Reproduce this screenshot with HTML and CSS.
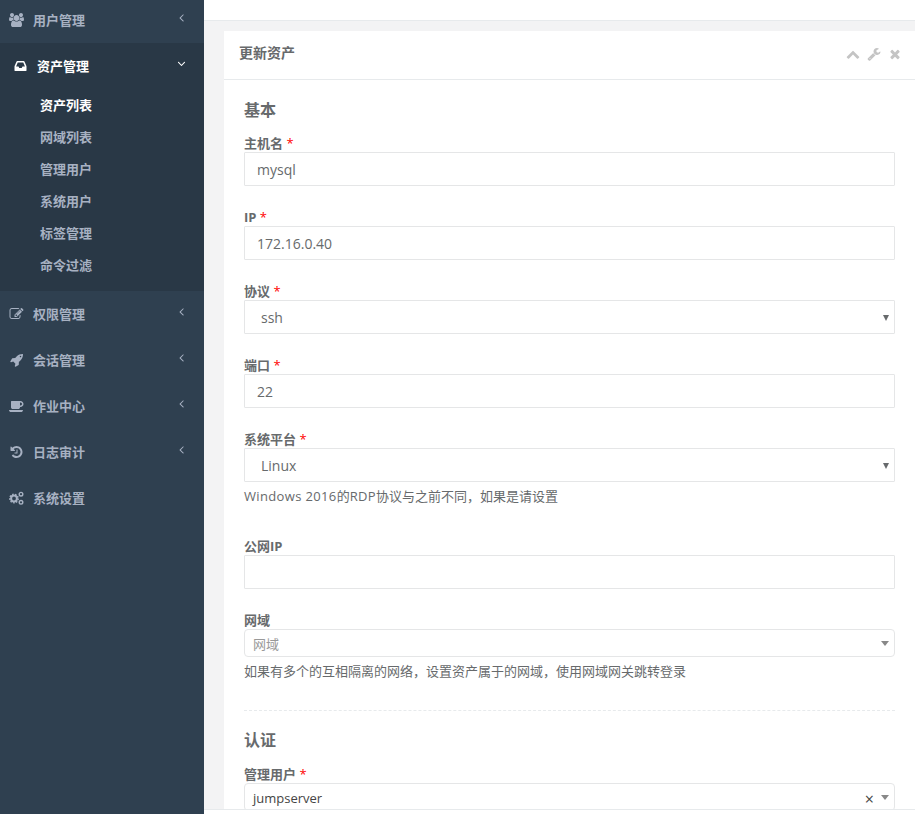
FILE: index.html
```html
<!DOCTYPE html>
<html lang="zh-CN">
<head>
<meta charset="utf-8">
<title>更新资产</title>
<link rel="stylesheet" href="styles.css">
</head>
<body>
<aside class="sidebar">
  <nav class="nav">
    <a class="nav-item">
      <svg class="ico" viewBox="0 0 1920 1792"><path d="M593 896q-162 5-265 128h-134q-82 0-138-40.500t-56-118.500q0-353 124-353 6 0 43.500 21t97.500 42.500 119 21.500q67 0 133-23-5 37-5 66 0 139 81 256zm1071 637q0 120-73 189.500t-194 69.500h-874q-121 0-194-69.500t-73-189.500q0-53 3.500-103.500t14-109 26.500-108.500 43-97.500 62-81 85.500-53.500 111.500-20q10 0 43 21.500t73 48 107 48 135 21.500 135-21.500 107-48 73-48 43-21.500q61 0 111.500 20t85.500 53.500 62 81 43 97.500 26.500 108.500 14 109 3.500 103.500zm-1024-1277q0 106-75 181t-181 75-181-75-75-181 75-181 181-75 181 75 75 181zm704 384q0 159-112.500 271.500t-271.500 112.500-271.500-112.500-112.500-271.500 112.500-271.500 271.500-112.500 271.500 112.500 112.500 271.500zm576 225q0 78-56 118.500t-138 40.500h-134q-103-123-265-128 81-117 81-256 0-29-5-66 66 23 133 23 59 0 119-21.500t97.500-42.500 43.500-21q124 0 124 353zm-128-609q0 106-75 181t-181 75-181-75-75-181 75-181 181-75 181 75 75 181z"/></svg>
      <span class="nav-label">用户管理</span>
      <svg class="angle" viewBox="0 0 1792 1792"><path d="M1203 544q0 13-10 23l-393 393 393 393q10 10 10 23t-10 23l-50 50q-10 10-23 10t-23-10l-466-466q-10-10-10-23t10-23l466-466q10-10 23-10t23 10l50 50q10 10 10 23z"/></svg>
    </a>
    <div class="nav-group">
      <a class="nav-item nav-item-active">
        <svg class="ico" viewBox="0 0 1536 1792"><path d="M1023 960h316q-1-3-2.500-8.500t-2.500-7.500l-212-496h-708l-212 496q-1 3-2.500 8.500t-2.500 7.500h316l95 192h320zm513 30v482q0 26-19 45t-45 19h-1408q-26 0-45-19t-19-45v-482q0-62 25-123l238-552q10-25 36.500-42t52.500-17h832q26 0 52.500 17t36.500 42l238 552q25 61 25 123z"/></svg>
        <span class="nav-label">资产管理</span>
        <svg class="angle" viewBox="0 0 1792 1792"><path d="M1395 736q0 13-10 23l-466 466q-10 10-23 10t-23-10l-466-466q-10-10-10-23t10-23l50-50q10-10 23-10t23 10l393 393 393-393q10-10 23-10t23 10l50 50q10 10 10 23z"/></svg>
      </a>
      <ul class="sub">
        <li class="sub-item sub-item-active">资产列表</li>
        <li class="sub-item">网域列表</li>
        <li class="sub-item">管理用户</li>
        <li class="sub-item">系统用户</li>
        <li class="sub-item">标签管理</li>
        <li class="sub-item">命令过滤</li>
      </ul>
    </div>
    <a class="nav-item">
      <svg class="ico" viewBox="0 0 1792 1792"><path d="M888 1184l116-116-152-152-116 116v56h96v96h56zm440-720q-16-16-33 1l-350 350q-17 17-1 33t33-1l350-350q17-17 1-33zm80 594v190q0 119-84.500 203.500t-203.500 84.500h-832q-119 0-203.500-84.500t-84.500-203.500v-832q0-119 84.500-203.500t203.500-84.500h832q63 0 117 25 15 7 18 23 3 17-9 29l-49 49q-14 14-32 8-23-6-45-6h-832q-66 0-113 47t-47 113v832q0 66 47 113t113 47h832q66 0 113-47t47-113v-126q0-13 9-22l64-64q15-15 35-7t20 29zm-96-738l288 288-672 672h-288v-288zm444 132l-92 92-288-288 92-92q28-28 68-28t68 28l152 152q28 28 28 68t-28 68z"/></svg>
      <span class="nav-label">权限管理</span>
      <svg class="angle" viewBox="0 0 1792 1792"><path d="M1203 544q0 13-10 23l-393 393 393 393q10 10 10 23t-10 23l-50 50q-10 10-23 10t-23-10l-466-466q-10-10-10-23t10-23l466-466q10-10 23-10t23 10l50 50q10 10 10 23z"/></svg>
    </a>
    <a class="nav-item">
      <svg class="ico" viewBox="0 0 1792 1792"><path d="M1504 448q0-40-28-68t-68-28-68 28-28 68 28 68 68 28 68-28 28-68zm224-288q0 249-75.500 430.500t-253.500 360.500q-81 80-195 176l-20 379q-2 16-16 26l-384 224q-7 4-16 4-12 0-23-9l-64-64q-13-14-8-32l85-276-281-281-276 85q-3 1-9 1-14 0-23-9l-64-64q-17-19-5-39l224-384q10-14 26-16l379-20q96-114 176-195 188-187 358-258t431-71q14 0 24 9.500t10 22.500z"/></svg>
      <span class="nav-label">会话管理</span>
      <svg class="angle" viewBox="0 0 1792 1792"><path d="M1203 544q0 13-10 23l-393 393 393 393q10 10 10 23t-10 23l-50 50q-10 10-23 10t-23-10l-466-466q-10-10-10-23t10-23l466-466q10-10 23-10t23 10l50 50q10 10 10 23z"/></svg>
    </a>
    <a class="nav-item">
      <svg class="ico" viewBox="0 0 1920 1792"><path d="M1664 640q0-80-56-136t-136-56h-64v384h64q80 0 136-56t56-136zm-1664 768h1792q0 106-75 181t-181 75h-1280q-106 0-181-75t-75-181zm1856-768q0 159-112.500 271.500t-271.500 112.500h-64v32q0 92-66 158t-158 66h-704q-92 0-158-66t-66-158v-736q0-26 19-45t45-19h1152q159 0 271.500 112.500t112.500 271.500z"/></svg>
      <span class="nav-label">作业中心</span>
      <svg class="angle" viewBox="0 0 1792 1792"><path d="M1203 544q0 13-10 23l-393 393 393 393q10 10 10 23t-10 23l-50 50q-10 10-23 10t-23-10l-466-466q-10-10-10-23t10-23l466-466q10-10 23-10t23 10l50 50q10 10 10 23z"/></svg>
    </a>
    <a class="nav-item">
      <svg class="ico" viewBox="0 0 1792 1792"><path d="M1664 896q0 156-61 298t-164 245-245 164-298 61q-172 0-327-72.500t-264-204.500q-7-10-6.500-22.500t8.500-20.500l137-138q10-9 25-9 16 2 23 12 73 95 179 147t225 52q104 0 198.500-40.500t163.500-109.500 109.500-163.500 40.500-198.500-40.500-198.500-109.500-163.500-163.500-109.500-198.500-40.500q-98 0-188 35.500t-160 101.500l137 138q31 30 14 69-17 40-59 40h-448q-26 0-45-19t-19-45v-448q0-42 40-59 39-17 69 14l130 129q107-101 244.500-156.500t284.500-55.500q156 0 298 61t245 164 164 245 61 298zm-640-288v448q0 14-9 23t-23 9h-320q-14 0-23-9t-9-23v-64q0-14 9-23t23-9h224v-352q0-14 9-23t23-9h64q14 0 23 9t9 23z"/></svg>
      <span class="nav-label">日志审计</span>
      <svg class="angle" viewBox="0 0 1792 1792"><path d="M1203 544q0 13-10 23l-393 393 393 393q10 10 10 23t-10 23l-50 50q-10 10-23 10t-23-10l-466-466q-10-10-10-23t10-23l466-466q10-10 23-10t23 10l50 50q10 10 10 23z"/></svg>
    </a>
    <a class="nav-item">
      <svg class="ico" viewBox="0 0 15 14">
        <circle class="gear-teeth" cx="5" cy="7.500" r="4.200"/>
        <circle class="gear-ring" cx="5" cy="7.500" r="2.900"/>
        <circle class="gear-ring-sm" cx="12" cy="3.200" r="1.800"/>
        <circle class="gear-ring-sm" cx="12" cy="11.300" r="1.800"/>
      </svg>
      <span class="nav-label">系统设置</span>
    </a>
  </nav>
</aside>
<div class="main">
  <div class="topbar"></div>
  <div class="content">
    <section class="card">
      <header class="card-title">
        <h5 class="card-heading">更新资产</h5>
        <div class="card-tools">
          <svg class="tool" viewBox="0 0 1792 1792"><path d="M1683 1331l-166 165q-19 19-45 19t-45-19l-531-531-531 531q-19 19-45 19t-45-19l-166-165q-19-19-19-45.500t19-45.500l742-741q19-19 45-19t45 19l742 741q19 19 19 45.500t-19 45.500z"/></svg>
          <svg class="tool" viewBox="0 0 1792 1792"><path d="M448 1472q0-26-19-45t-45-19-45 19-19 45 19 45 45 19 45-19 19-45zm644-420l-682 682q-37 37-90 37-52 0-91-37l-106-108q-38-36-38-90 0-53 38-91l681-681q39 98 114.500 173.500t173.500 114.500zm634-435q0 39-23 106-47 134-164.500 217.500t-258.500 83.500q-185 0-316.500-131.500t-131.500-316.500 131.500-316.500 316.500-131.500q58 0 121.500 16.500t107.500 46.500q16 11 16 28t-16 28l-293 169v224l193 107q5-3 79-48.500t135.500-81 70.500-35.500q15 0 23.500 10t8.500 25z"/></svg>
          <svg class="tool" viewBox="0 0 1792 1792"><path d="M1490 1322q0 40-28 68l-136 136q-28 28-68 28t-68-28l-294-294-294 294q-28 28-68 28t-68-28l-136-136q-28-28-28-68t28-68l294-294-294-294q-28-28-28-68t28-68l136-136q28-28 68-28t68 28l294 294 294-294q28-28 68-28t68 28l136 136q28 28 28 68t-28 68l-294 294 294 294q28 28 28 68z"/></svg>
        </div>
      </header>
      <form class="card-body">
        <h3 class="section-title">基本</h3>
        <div class="field">
          <label class="label">主机名 <span class="req">*</span></label>
          <input class="input" type="text" value="mysql">
        </div>
        <div class="field">
          <label class="label">IP <span class="req">*</span></label>
          <input class="input" type="text" value="172.16.0.40">
        </div>
        <div class="field">
          <label class="label">协议 <span class="req">*</span></label>
          <div class="select"><span>ssh</span><i class="caret"></i></div>
        </div>
        <div class="field">
          <label class="label">端口 <span class="req">*</span></label>
          <input class="input" type="text" value="22">
        </div>
        <div class="field field-help">
          <label class="label">系统平台 <span class="req">*</span></label>
          <div class="select"><span>Linux</span><i class="caret"></i></div>
          <p class="help"><span class="latin">Windows 2016</span>的<span class="latin">RDP</span>协议与之前不同，如果是请设置</p>
        </div>
        <div class="field">
          <label class="label">公网IP</label>
          <input class="input" type="text">
        </div>
        <div class="field field-last">
          <label class="label">网域</label>
          <div class="select2"><span class="placeholder">网域</span><i class="caret2"></i></div>
          <p class="help">如果有多个的互相隔离的网络，设置资产属于的网域，使用网域网关跳转登录</p>
        </div>
        <div class="divider"></div>
        <h3 class="section-title section-title-b">认证</h3>
        <div class="field">
          <label class="label">管理用户 <span class="req">*</span></label>
          <div class="select2 select2-open"><span class="value">jumpserver</span><span class="clear">×</span><i class="caret2"></i></div>
        </div>
      </form>
    </section>
  </div>
  <div class="footer"></div>
</div>
</body>
</html>
```
FILE: styles.css
```css
* { box-sizing: border-box; }
html, body { margin: 0; padding: 0; height: 814px; overflow: hidden; }
body {
  display: flex;
  font-family: "Open Sans", "Noto Sans CJK SC", sans-serif;
  font-size: 13px;
  color: #676a6c;
  background: #f3f3f4;
}
.sidebar { flex: 0 0 204px; height: 814px; background: #2f4050; overflow: hidden; }
.nav { display: flex; flex-direction: column; margin-top: -3px; }
.nav-item {
  display: flex;
  align-items: center;
  height: 46px;
  padding-left: 9px;
  color: #a7b1c2;
  font-weight: 600;
}
.ico { width: 15px; height: 14px; fill: #a7b1c2; flex: none; }
.nav-label { margin-left: 9px; line-height: 18px; }
.angle { width: 13px; height: 13px; fill: #a7b1c2; margin-left: auto; margin-right: 16px; margin-top: -6px; flex: none; }
.nav-group { background: #293846; padding-bottom: 10px; }
.nav-item-active { color: #fff; padding-left: 13px; }
.nav-item-active .ico { fill: #fff; }
.nav-item-active .angle { fill: #fff; }
.sub { list-style: none; margin: 0; padding: 0; }
.sub-item { height: 32px; line-height: 32px; padding-left: 40px; color: #a7b1c2; font-weight: 600; }
.sub-item-active { color: #fff; }

.main { flex: 1; min-width: 0; height: 814px; display: flex; flex-direction: column; }
.topbar { flex: 0 0 21px; background: #fff; border-bottom: 1px solid #e7eaec; }
.content { flex: 1; min-height: 0; overflow: hidden; padding: 10px 0 0 20px; }
.footer { flex: 0 0 5px; background: #fff; border-top: 1px solid #e7eaec; }
.card { background: #fff; }
.card-title {
  display: flex;
  align-items: center;
  justify-content: space-between;
  height: 49px;
  padding: 0 15px;
  border-bottom: 1px solid #e7eaec;
}
.card-heading { margin: 0 0 4px; font-size: 14px; font-weight: 600; line-height: 18px; color: #676a6c; }
.card-tools { display: flex; align-items: center; gap: 7px; margin-right: -2px; margin-bottom: 2px; }
.tool { width: 14px; height: 14px; fill: #c4c4c4; }
.card-body { padding: 20px 20px 0; }
.section-title { margin: 0 0 14px; font-size: 16px; font-weight: 600; line-height: 20px; }
.section-title-b { margin-bottom: 15px; }
.field { margin-bottom: 22px; }
.field-help { margin-bottom: 32px; }
.field-last { margin-bottom: 30px; }
.label { display: block; height: 18px; line-height: 18px; font-weight: 700; font-size: 13px; }
.req { color: #f00; font-weight: 400; }
.input {
  display: block;
  width: 100%;
  height: 34px;
  padding: 0 12px;
  border: 1px solid #e5e6e7;
  border-radius: 1px;
  background: #fff;
  font: 14px "Open Sans", "Noto Sans CJK SC", sans-serif;
  color: #676a6c;
  outline: none;
}
.select {
  position: relative;
  display: flex;
  align-items: center;
  height: 34px;
  padding-left: 16px;
  border: 1px solid #e5e6e7;
  border-radius: 1px;
  font-size: 14px;
}
.caret {
  position: absolute;
  right: 5px;
  top: 14px;
  width: 0;
  height: 0;
  border-left: 3px solid transparent;
  border-right: 3px solid transparent;
  border-top: 6px solid #676a6c;
}
.help { margin: 5px 0 0; line-height: 18px; font-size: 13px; color: #676a6c; }
.latin { letter-spacing: 0.35px; }
.select2 {
  position: relative;
  display: flex;
  align-items: center;
  height: 28px;
  padding-left: 8px;
  border: 1px solid #e5e6e7;
  border-radius: 4px;
}
.placeholder { color: #999; font-size: 13px; }
.value { font-size: 13px; color: #444; padding-top: 2px; }
.clear { position: absolute; right: 20px; top: 5px; font-size: 16px; line-height: 20px; color: #444; }
.caret2 {
  position: absolute;
  right: 5px;
  top: 11px;
  width: 0;
  height: 0;
  border-left: 4px solid transparent;
  border-right: 4px solid transparent;
  border-top: 5px solid #888;
}
.divider { border-top: 1px dashed #e7eaec; margin-bottom: 19px; }
.gear-teeth { fill: none; stroke: #a7b1c2; stroke-width: 1.500; stroke-dasharray: 1.500 1.400; }
.gear-ring { fill: none; stroke: #a7b1c2; stroke-width: 2; }
.gear-ring-sm { fill: none; stroke: #a7b1c2; stroke-width: 1.400; }
```
